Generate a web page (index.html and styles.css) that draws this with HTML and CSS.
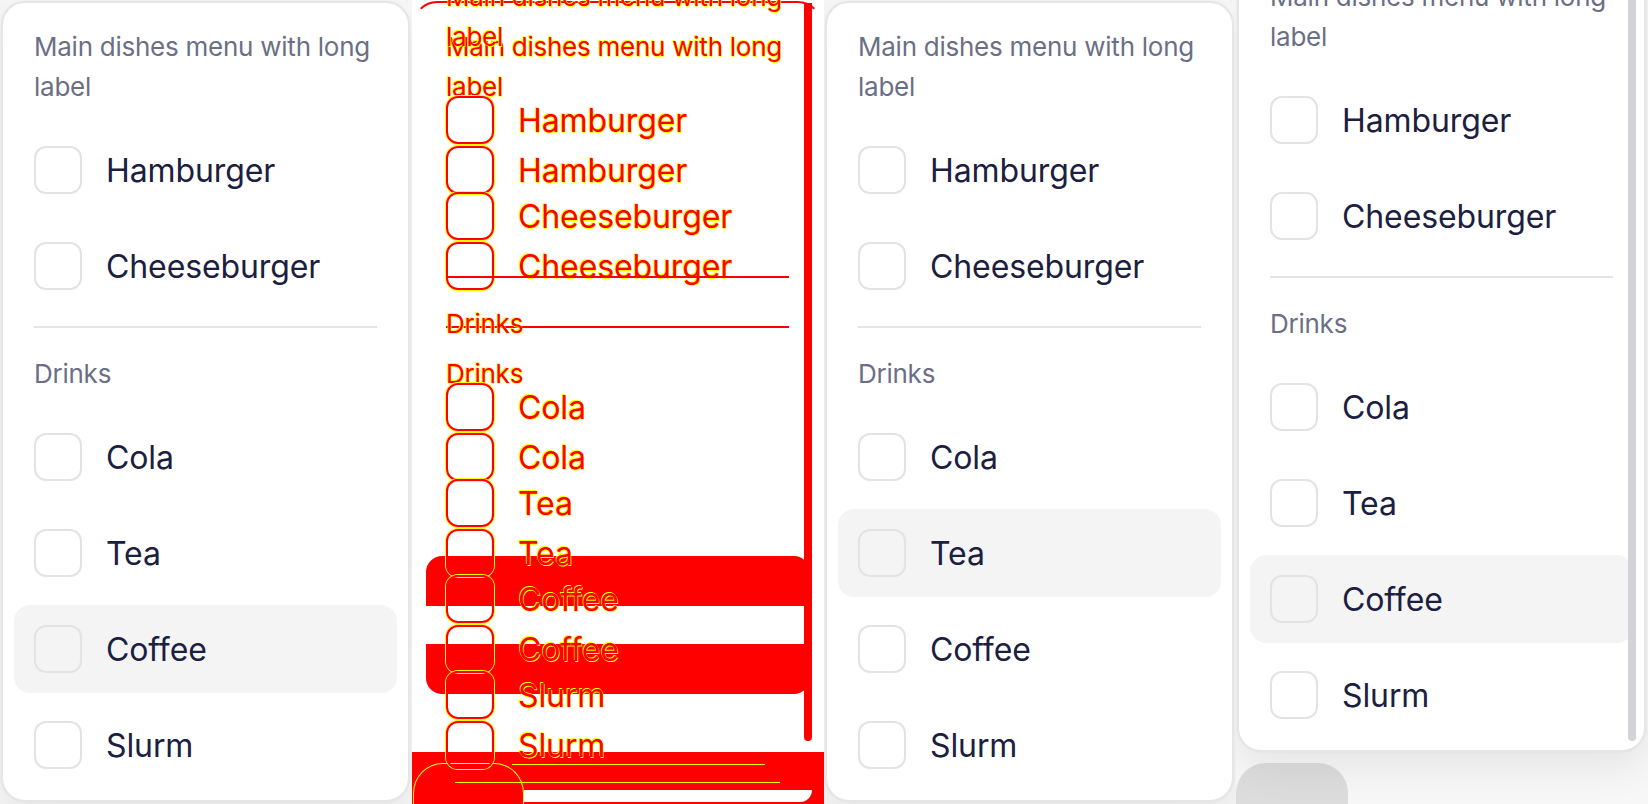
FILE: index.html
```html
<!DOCTYPE html>
<html lang="en">
<head>
<meta charset="utf-8">
<title>Menu states</title>
<link rel="stylesheet" href="styles.css">
</head>
<body>
<div class="stage">

  <section class="panel">
    <div class="menu">
      <div class="label">Main dishes menu with long label</div>
      <div class="item"><span class="check"></span><span class="text">Hamburger</span></div>
      <div class="item"><span class="check"></span><span class="text">Cheeseburger</span></div>
      <div class="sep"></div>
      <div class="label">Drinks</div>
      <div class="item"><span class="check"></span><span class="text">Cola</span></div>
      <div class="item"><span class="check"></span><span class="text">Tea</span></div>
      <div class="item hover"><span class="check"></span><span class="text">Coffee</span></div>
      <div class="item"><span class="check"></span><span class="text">Slurm</span></div>
    </div>
  </section>

  <section class="panel diff">
    <div class="mark bar bar-a"></div>
    <div class="mark bar bar-b"></div>
    <div class="mark sbar"></div>
    <div class="mark bottom"></div>
    <div class="mark hole"></div>
    <div class="mark btn-line"></div>
    <div class="mark yl yl-1"></div>
    <div class="mark yl yl-2"></div>
    <div class="ghosts">
      <div class="menu ghost ghost-a">
        <div class="label">Main dishes menu with long label</div>
        <div class="item"><span class="check"></span><span class="text">Hamburger</span></div>
        <div class="item"><span class="check"></span><span class="text">Cheeseburger</span></div>
        <div class="sep"></div>
        <div class="label">Drinks</div>
        <div class="item"><span class="check"></span><span class="text">Cola</span></div>
        <div class="item"><span class="check"></span><span class="text">Tea</span></div>
        <div class="item"><span class="check"></span><span class="text">Coffee</span></div>
        <div class="item"><span class="check"></span><span class="text">Slurm</span></div>
      </div>
      <div class="menu ghost ghost-b">
        <div class="label">Main dishes menu with long label</div>
        <div class="item"><span class="check"></span><span class="text">Hamburger</span></div>
        <div class="item"><span class="check"></span><span class="text">Cheeseburger</span></div>
        <div class="sep"></div>
        <div class="label">Drinks</div>
        <div class="item"><span class="check"></span><span class="text">Cola</span></div>
        <div class="item"><span class="check"></span><span class="text">Tea</span></div>
        <div class="item"><span class="check"></span><span class="text">Coffee</span></div>
        <div class="item"><span class="check"></span><span class="text">Slurm</span></div>
      </div>
    </div>
  </section>

  <section class="panel">
    <div class="menu">
      <div class="label">Main dishes menu with long label</div>
      <div class="item"><span class="check"></span><span class="text">Hamburger</span></div>
      <div class="item"><span class="check"></span><span class="text">Cheeseburger</span></div>
      <div class="sep"></div>
      <div class="label">Drinks</div>
      <div class="item"><span class="check"></span><span class="text">Cola</span></div>
      <div class="item hover"><span class="check"></span><span class="text">Tea</span></div>
      <div class="item"><span class="check"></span><span class="text">Coffee</span></div>
      <div class="item"><span class="check"></span><span class="text">Slurm</span></div>
    </div>
  </section>

  <section class="panel">
    <div class="menu scrolled">
      <div class="label">Main dishes menu with long label</div>
      <div class="item"><span class="check"></span><span class="text">Hamburger</span></div>
      <div class="item"><span class="check"></span><span class="text">Cheeseburger</span></div>
      <div class="sep"></div>
      <div class="label">Drinks</div>
      <div class="item"><span class="check"></span><span class="text">Cola</span></div>
      <div class="item"><span class="check"></span><span class="text">Tea</span></div>
      <div class="item hover"><span class="check"></span><span class="text">Coffee</span></div>
      <div class="item"><span class="check"></span><span class="text">Slurm</span></div>
      <div class="scrollbar"></div>
    </div>
    <div class="trigger"></div>
  </section>

</div>
</body>
</html>
```

FILE: styles.css
```css
* { box-sizing: border-box; margin: 0; padding: 0; }

html, body {
  width: 1648px;
  height: 804px;
  overflow: hidden;
  background: #ffffff;
}

body {
  font-family: Inter, "Liberation Sans", sans-serif;
}

.stage {
  display: flex;
  width: 1648px;
  height: 804px;
}

.panel {
  position: relative;
  flex: none;
  width: 412px;
  height: 804px;
  overflow: hidden;
  display: flex;
  flex-direction: column;
  align-items: flex-start;
  background: #f7f7f7;
}

.menu {
  position: relative;
  z-index: 1;
  flex: none;
  width: 409px;
  height: 801px;
  margin: 1px 0 0 1px;
  padding: 11px;
  display: flex;
  flex-direction: column;
  gap: 8px;
  background: #ffffff;
  border: 2px solid #e6e6e6;
  border-radius: 24px;
  box-shadow: 0 0 2px rgba(0, 0, 0, 0.05), 0 14px 40px rgba(0, 0, 0, 0.08);
}

.label {
  padding: 13px 20px 11px;
  font-size: 26px;
  line-height: 40px;
  color: #6b6f86;
  letter-spacing: -0.25px;
}

.item {
  flex: none;
  height: 88px;
  padding: 0 20px;
  display: flex;
  align-items: center;
  gap: 24px;
  border-radius: 16px;
  font-size: 32px;
  color: #1b2040;
  letter-spacing: -0.1px;
}

.item.hover { background: #f4f4f4; }

.check {
  flex: none;
  width: 48px;
  height: 48px;
  border: 2px solid #e3e3e3;
  border-radius: 12px;
}

.sep {
  flex: none;
  height: 2px;
  margin: 8px 20px 5px;
  background: #e4e4e4;
}

/* scrolled state */
.menu.scrolled { margin-top: -49px; }

.scrollbar {
  position: absolute;
  top: 0;
  right: 8px;
  bottom: 9px;
  width: 8px;
  border-radius: 4px;
  background: #d2d2d7;
}

.trigger {
  flex: none;
  width: 112px;
  height: 60px;
  margin-top: 11px;
  border-radius: 30px 30px 0 0;
  background: #dcdcdc;
}

/* diff panel */
.panel.diff { background: #ffffff; }

.ghosts {
  display: grid;
  width: 412px;
}

.ghosts > .menu { grid-area: 1 / 1; }

.ghost {
  background: transparent;
  border-color: transparent;
  box-shadow: none;
}

.ghost-a { border-top-color: #ff0000; }
.ghost-b { margin-top: -49px; }

.ghost .label,
.ghost .item {
  color: #ff0000;
  text-shadow: 0.7px 0.7px 0 #ffff00, -0.7px -0.7px 0 #ffff00;
}

.ghost .check {
  border-color: #ff0000;
  box-shadow: 0 0 0 1px #ffff00;
}

.ghost .sep { background: #ff0000; }

.mark { position: absolute; z-index: 0; }

.bar {
  left: 14px;
  width: 384px;
  height: 50px;
  background: #ff0000;
}

.bar-a { top: 556px; border-radius: 16px 16px 0 0; }
.bar-b { top: 644px; border-radius: 0 0 16px 16px; }

.sbar {
  top: 3px;
  left: 392px;
  width: 8px;
  height: 738px;
  border-radius: 0 0 4px 4px;
  background: #ff0000;
}

.bottom {
  top: 752px;
  left: 0;
  right: 0;
  bottom: 0;
  background: #ff0000;
}

.hole {
  top: 790px;
  left: 112px;
  width: 288px;
  height: 12px;
  border-radius: 0 0 12px 0;
  background: #ffffff;
}

.btn-line {
  z-index: 1;
  top: 763px;
  left: 1px;
  width: 111px;
  height: 45px;
  border: 1px solid #ffff00;
  border-bottom: none;
  border-radius: 30px 30px 0 0;
}

.yl {
  z-index: 1;
  height: 1px;
  background: #ffff00;
}

.yl-1 { top: 764px; left: 100px; width: 253px; }
.yl-2 { top: 782px; left: 43px; width: 325px; }
```
